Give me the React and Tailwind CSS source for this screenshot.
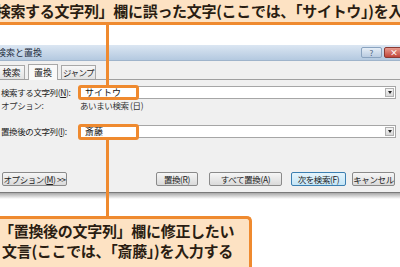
import React from 'react';

const jp = { fontFamily: '"Noto Sans CJK JP", "Noto Sans", sans-serif' };

const Btn = ({ children, className = '', active }) => (
    <div
        className={`h-[14px] flex items-center justify-center whitespace-nowrap text-[8.5px] tracking-[-0.4px] text-[#222] rounded-[2px] border ${active ? 'border-[#3c7fb1] bg-gradient-to-b from-[#e5f4fc] to-[#c4e5f6]' : 'border-[#8a8a8a] bg-gradient-to-b from-[#f6f6f6] to-[#dadada]'} ${className}`}
    >
        {children}
    </div>
);

const Combo = ({ value }) => (
    <div className="relative flex-1 h-[13px] bg-white border border-[#a6a6a6] flex items-center">
        <span className="pl-[5px] text-[9px] text-[#111]">{value}</span>
        <div className="absolute right-[1px] top-[1px] w-[9px] h-[9px] bg-gradient-to-b from-[#f4f4f4] to-[#d8d8d8] border border-[#b0b0b0] flex items-center justify-center">
            <div className="w-0 h-0 border-l-[2.5px] border-r-[2.5px] border-t-[3px] border-l-transparent border-r-transparent border-t-[#222]" />
        </div>
    </div>
);

export default function App() {
    return (
        <div className="relative w-[400px] h-[267px] overflow-hidden bg-white" style={jp}>
            {/* --- top callout --- */}
            <div className="h-[25px] bg-[#fde2c3] border-b-[3px] border-[#ef8a2f] overflow-hidden">
                <div className="-ml-[19px] whitespace-nowrap text-[15px] font-bold leading-[22px] tracking-[-0.3px] text-[#2a1d12]">
                    「検索する文字列」欄に誤った文字(ここでは、「サイトウ」)を入力する
                </div>
            </div>

            <div className="h-[20px]" />

            {/* --- dialog --- */}
            <div className="h-[148px] bg-[#f0f0f0] border-b border-[#7a7a7a] flex flex-col">
                <div className="h-[16px] bg-gradient-to-b from-[#dbe6f2] to-[#b4c9e0] border-b border-[#9fb4cb] flex items-center justify-between">
                    <span className="-ml-[3px] text-[9px] text-[#1e2d40]">検索と置換</span>
                    <div className="flex items-center gap-[2px] -mr-[4px]">
                        <div className="w-[21px] h-[11px] rounded-[2px] border border-[#8aa3bf] bg-gradient-to-b from-[#e6eef7] to-[#b9cbe0] flex items-center justify-center text-[8px] leading-none text-[#4a5d78]">?</div>
                        <div className="w-[20px] h-[11px] rounded-[2px] border border-[#8a3b33] bg-gradient-to-b from-[#e79a8e] to-[#c0443a] flex items-center justify-center text-[8px] leading-none text-white font-bold">×</div>
                    </div>
                </div>

                {/* tabs */}
                <div className="mt-[3px] h-[16px] flex items-end border-b border-[#a0a0a0] text-[9px] text-[#222] whitespace-nowrap">
                    <div className="-ml-[2px] w-[27px] h-[14px] border border-b-0 border-[#a8a8a8] bg-gradient-to-b from-[#f7f7f7] to-[#e2e2e2] flex items-center justify-center">検索</div>
                    <div className="ml-[3px] w-[30px] h-[16px] border border-b-0 border-[#a8a8a8] bg-[#f9f9f9] flex items-center justify-center -mb-px">置換</div>
                    <div className="ml-[3px] w-[35px] h-[14px] border border-b-0 border-[#a8a8a8] bg-gradient-to-b from-[#f7f7f7] to-[#e2e2e2] flex items-center justify-center text-[8.5px] tracking-[-0.6px]">ジャンプ</div>
                </div>

                {/* form */}
                <div className="mt-[6px] flex items-center h-[13px] pr-[4px]">
                    <span className="w-[79px] pl-[1px] text-[8.5px] tracking-[-0.4px] text-[#222] whitespace-nowrap">検索する文字列(<u>N</u>):</span>
                    <Combo value="サイトウ" />
                </div>
                <div className="mt-[1px] flex items-center h-[11px] text-[8.5px] tracking-[-0.4px] text-[#333]">
                    <span className="w-[80px] pl-[1px]">オプション:</span>
                    <span>あいまい検索 (日)</span>
                </div>

                <div className="mt-[14px] flex items-center h-[13px] pr-[4px]">
                    <span className="w-[79px] pl-[1px] text-[8.5px] tracking-[-0.4px] text-[#222] whitespace-nowrap">置換後の文字列(<u>I</u>):</span>
                    <Combo value="斎藤" />
                </div>

                <div className="mt-[34px] flex items-center pr-[5px]">
                    <Btn className="ml-[2px] w-[65px]">オプション(<u>M</u>) &gt;&gt;</Btn>
                    <Btn className="ml-auto w-[42px]">置換(R)</Btn>
                    <Btn className="ml-[11px] w-[73px]">すべて置換(A)</Btn>
                    <Btn className="ml-[9px] w-[55px]" active>次を検索(F)</Btn>
                    <Btn className="ml-[6px] w-[43px]">キャンセル</Btn>
                </div>
            </div>
            <div className="h-[6px] bg-gradient-to-b from-[#a8a8a8] to-white" />

            <div className="h-[17px]" />

            {/* --- bottom callout --- */}
            <div className="-ml-[4px] w-[256px] h-[60px] bg-[#fde2c3] border-t-[3px] border-r-[3px] border-[#ef8a2f] rounded-tr-[5px] pl-[3px] pt-[2px] text-[15px] font-bold leading-[20px] tracking-[-0.3px] text-[#2a1d12] whitespace-nowrap">
                <div>「置換後の文字列」欄に修正したい</div>
                <div className="pl-[3px]">文言(ここでは、「斎藤」)を入力する</div>
            </div>

            {/* --- annotation highlights and leader lines --- */}
            <div className="absolute left-[78px] top-[85px] w-[61px] h-[15px] border-[3px] border-[#ef8a2f] rounded-[3px]" />
            <div className="absolute left-[78px] top-[124px] w-[61px] h-[16px] border-[3px] border-[#ef8a2f] rounded-[3px]" />
            <div className="absolute left-[106px] top-[25px] w-[3px] h-[60px] bg-[#ef8a2f]" />
            <div className="absolute left-[106px] top-[140px] w-[3px] h-[77px] bg-[#ef8a2f]" />
        </div>
    );
}
